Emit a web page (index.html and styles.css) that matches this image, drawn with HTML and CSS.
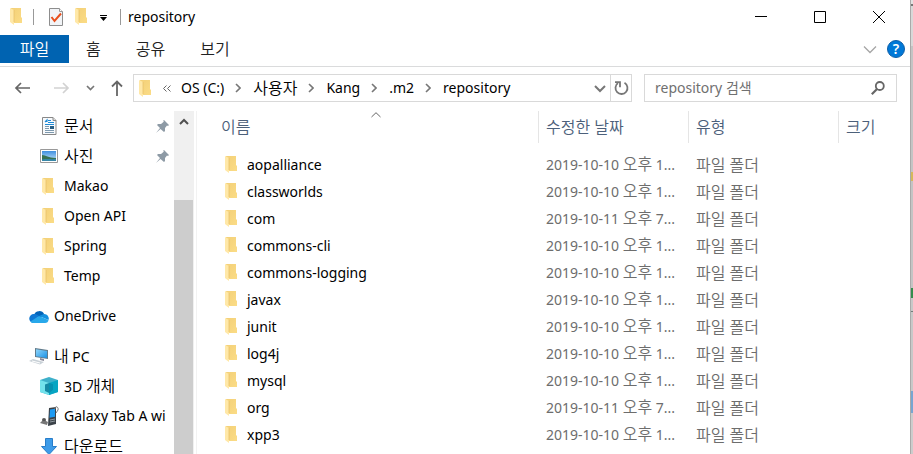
FILE: index.html
```html
<!DOCTYPE html>
<html lang="ko">
<head>
<meta charset="utf-8">
<title>repository</title>
<link rel="stylesheet" href="styles.css">
</head>
<body>
<svg class="sprite" aria-hidden="true">
  <defs>
    <linearGradient id="fold" x1="0" y1="0" x2="1" y2="1"><stop offset="0" stop-color="#f3d078"/><stop offset="1" stop-color="#fbdc86"/></linearGradient>
    <linearGradient id="sky" x1="0" y1="0" x2="0" y2="1"><stop offset="0" stop-color="#3f8fe0"/><stop offset="1" stop-color="#c9e8fa"/></linearGradient>
    <linearGradient id="screen" x1="0" y1="0" x2="1" y2="1"><stop offset="0" stop-color="#8fd6fb"/><stop offset="1" stop-color="#1a90e4"/></linearGradient>
  </defs>
  <symbol id="folder" viewBox="0 0 12 17"><path d="M1 0h10v9l1 1v5H3z" fill="url(#fold)"/><path d="M0 0l4 2v15l-4-3z" fill="#ffe8a8"/><path d="M4 2v12" stroke="#e9c26a" stroke-width=".8"/></symbol>
  <symbol id="chev" viewBox="0 0 6 10"><path d="M1 1l4 4-4 4" fill="none" stroke="#777" stroke-width="1.6"/></symbol>
  <symbol id="pin" viewBox="0 0 13 13"><path d="M8 0l5 5-1 1-1-.5L9 8v3l-1 1-3.500-3L0 13l4-5-3-3 1-1h3l3-2.500L7 1z" fill="#8d9aa5"/></symbol>
</svg>
<div class="desktop">
<main class="window">
  <header class="titlebar">
    <svg class="folder"><use href="#folder"/></svg>
    <span class="rule first"></span>
    <button class="plain props" aria-label="속성"><svg width="14" height="18" viewBox="0 0 14 18"><path d="M.5.5h10l3 3v14H.500z" fill="#f2f4f7" stroke="#8d8d8d"/><path d="M10.500.5v3h3" fill="#fff" stroke="#999"/><path d="M2.500 9l3 4L12 5.500" fill="none" stroke="#e8501e" stroke-width="2"/></svg></button>
    <button class="plain newf" aria-label="새 폴더"><svg class="folder"><use href="#folder"/></svg></button>
    <button class="plain custom" aria-label="빠른 실행 도구 모음 사용자 지정"><svg width="7" height="6" viewBox="0 0 7 6"><path d="M0 0h7v1H0zM0 2h7L3.500 6z"/></svg></button>
    <span class="rule"></span>
    <h1 class="title">repository</h1>
    <div class="controls">
      <button class="plain" aria-label="최소화"><svg width="12" height="12"><path d="M0 5.500h12" stroke="#000"/></svg></button>
      <button class="plain" aria-label="최대화"><svg width="12" height="12"><path d="M.5.5h11v11H.500z" fill="none" stroke="#000"/></svg></button>
      <button class="plain" aria-label="닫기"><svg width="12" height="12"><path d="M0 0l12 12M12 0L0 12" stroke="#000"/></svg></button>
    </div>
  </header>
  <nav class="tabs">
    <button class="plain file">파일</button>
    <button class="plain tab">홈</button>
    <button class="plain tab">공유</button>
    <button class="plain tab">보기</button>
    <div class="tools">
      <button class="plain" aria-label="리본 확장"><svg width="12" height="7"><path d="M0 .5l6 6 6-6" fill="none" stroke="#a5a5a5" stroke-width="1.300"/></svg></button>
      <button class="plain help" aria-label="도움말">?</button>
    </div>
  </nav>
  <div class="navbar">
    <div class="history">
      <button class="plain" aria-label="뒤로"><svg width="16" height="12" viewBox="0 0 16 12"><path d="M15 6H1M6 1L1 6l5 5" fill="none" stroke="#666" stroke-width="1.700"/></svg></button>
      <button class="plain" aria-label="앞으로"><svg width="16" height="12" viewBox="0 0 16 12"><path d="M0 6h14M9 1l5 5-5 5" fill="none" stroke="#d2d2d2" stroke-width="1.700"/></svg></button>
      <button class="plain" aria-label="최근 위치"><svg width="9" height="6"><path d="M1 1l3.500 3.500L8 1" fill="none" stroke="#777" stroke-width="1.700"/></svg></button>
      <button class="plain" aria-label="위로"><svg width="12" height="16" viewBox="0 0 12 16"><path d="M6 16V1M1 6.500l5-5 5 5" fill="none" stroke="#666" stroke-width="1.800"/></svg></button>
    </div>
    <div class="address">
      <svg class="folder"><use href="#folder"/></svg>
      <svg class="more" width="8" height="7"><path d="M3.500.5l-3 3 3 3M7.500.5l-3 3 3 3" fill="none" stroke="#666"/></svg>
      <a href="#">OS (C:)</a><svg class="chev"><use href="#chev"/></svg>
      <a href="#" class="ko">사용자</a><svg class="chev"><use href="#chev"/></svg>
      <a href="#">Kang</a><svg class="chev"><use href="#chev"/></svg>
      <a href="#">.m2</a><svg class="chev"><use href="#chev"/></svg>
      <a href="#">repository</a>
      <button class="plain drop" aria-label="이전 위치"><svg width="12" height="8"><path d="M1 1l5 5 5-5" fill="none" stroke="#777" stroke-width="2"/></svg></button>
      <button class="plain refresh" aria-label="새로 고침"><svg width="15" height="15" viewBox="0 0 15 15"><path d="M10.500 1.800a6 6 0 1 1-6.500.3" fill="none" stroke="#777" stroke-width="1.800"/><path d="M1 1.200h5v5" fill="none" stroke="#777" stroke-width="1.800"/></svg></button>
    </div>
    <label class="search">
      <input type="text" aria-label="repository 검색" placeholder="repository 검색">
      <svg width="14" height="14" viewBox="0 0 14 14"><circle cx="8.800" cy="5" r="4" fill="none" stroke="#666" stroke-width="1.800"/><path d="M6 8L.8 13.200" stroke="#666" stroke-width="2.200"/></svg>
    </label>
  </div>
  <div class="body">
    <aside class="side">
      <ul class="tree">
        <li class="sub"><span class="ico"><svg width="15" height="18" viewBox="0 0 15 18"><path d="M.5.5h10.500l3 3v14H.500z" fill="#f8fafc" stroke="#888"/><path d="M11 .5v3h3" fill="#ddd" stroke="#888"/><path d="M3 5l2-2v2M6 3.500h3M6 5.500h6M3 7.500h9" fill="none" stroke="#1e8ad6" stroke-width="1.200"/><path d="M3 9.500h4M3 11.500h4M3 13.500h9M3 15.500h9" stroke="#7d99ae"/><path d="M8 9h4v3H8z" fill="#265d83"/></svg></span><span class="ko">문서</span><svg class="pin"><use href="#pin"/></svg></li>
        <li class="sub"><span class="ico"><svg width="18" height="14" viewBox="0 0 18 14"><path d="M.5.5h17v13H.500z" fill="#fff" stroke="#999"/><path d="M2 2h14v10H2z" fill="url(#sky)"/><path d="M2 6c4 0 6 3 14 3v3H2z" fill="#387253"/><path d="M2 10.500c5-1 9 0 14-.5v2H2z" fill="#3787a8"/></svg></span><span class="ko">사진</span><svg class="pin"><use href="#pin"/></svg></li>
        <li class="sub"><span class="ico"><svg class="folder"><use href="#folder"/></svg></span>Makao</li>
        <li class="sub"><span class="ico"><svg class="folder"><use href="#folder"/></svg></span>Open API</li>
        <li class="sub"><span class="ico"><svg class="folder"><use href="#folder"/></svg></span>Spring</li>
        <li class="sub"><span class="ico"><svg class="folder"><use href="#folder"/></svg></span>Temp</li>
      </ul>
      <ul class="tree">
        <li><span class="ico"><svg width="20" height="13" viewBox="0 0 20 13"><path d="M5 5a5.500 5.500 0 0 1 10.200-.8L11 8z" fill="#0364b8"/><path d="M4.500 13A4.500 4.500 0 0 1 5 4c2 0 3 .6 5 2L4 12z" fill="#0f78d4"/><path d="M10 6l5-2a4.500 4.500 0 0 1 4.500 6z" fill="#1490df"/><path d="M1.500 11.500L10 6l9.500 4c-.2 2-1.500 3-3.500 3H4.500c-1.300 0-2.300-.5-3-1.500z" fill="#28a8ea"/></svg></span>OneDrive</li>
      </ul>
      <ul class="tree">
        <li><span class="ico"><svg width="20" height="17" viewBox="0 0 20 17"><path d="M6 0l13 2v9l-13-2z" fill="#607a8b"/><path d="M7 1.200l11 1.800v7L7 8.200z" fill="url(#screen)"/><path d="M11 10l4 1v2l-4-1z" fill="#889"/><path d="M0 13l4-2 11 3-4 2.500z" fill="#c9d1d7"/><path d="M3 13l8 2" stroke="#fff"/></svg></span><span><span class="ko">내</span> PC</span></li>
        <li class="sub"><span class="ico"><svg width="18" height="18" viewBox="0 0 18 18"><path d="M9 0l9 3v12l-9 3-9-3V3z" fill="#3eb0ca"/><path d="M0 3l9 3v12l-9-3z" fill="#72e2ec"/><path d="M18 3L9 6v12l9-3z" fill="#06a5c3"/><path d="M5 7.500L9 6l4 1.500v5L9 16l-4-2z" fill="#168aa5"/><path d="M9 6v10l4-3.500v-5z" fill="#0590b0"/></svg></span><span>3D <span class="ko">개체</span></span></li>
        <li class="sub"><span class="ico"><svg width="20" height="20" viewBox="0 0 20 20"><path d="M10 2l7-1v17l-8 2z" fill="#3b4248"/><path d="M11 3.500l5-.7v8l-5.500 1z" fill="#1d9af2"/><path d="M11 14l5-1M11 16l5-1" stroke="#90999f"/><path d="M16 3c0-4 4-2 3 1l-2 3" fill="none" stroke="#777"/><circle cx="5" cy="14" r="2" fill="#555"/><path d="M1 17l2-2h4l2 1-1 3z" fill="#777"/></svg></span>Galaxy Tab A wi</li>
        <li class="sub"><span class="ico"><svg width="16" height="17" viewBox="0 0 16 17"><path d="M4.500.5h7v8h4L8 16.500.500 8.500h4z" fill="#3e9ce9" stroke="#287dc9"/></svg></span><span class="ko">다운로드</span></li>
      </ul>
    </aside>
    <div class="scroll"><svg width="10" height="7"><path d="M1 6l4-4 4 4" fill="none" stroke="#505050" stroke-width="2"/></svg><div class="thumb"></div></div>
    <section class="files">
      <table>
        <colgroup><col><col class="c-date"><col class="c-type"><col class="c-size"></colgroup>
        <thead><tr><th class="name">이름<svg class="sort" width="10" height="6"><path d="M.5 5L5 .7 9.500 5" fill="none" stroke="#666"/></svg></th><th>수정한 날짜</th><th>유형</th><th>크기</th></tr></thead>
        <tbody>
          <tr><td><svg class="folder"><use href="#folder"/></svg>aopalliance</td><td>2019-10-10 <span class="ko">오후</span> 1...</td><td class="ko">파일 폴더</td><td></td></tr>
          <tr><td><svg class="folder"><use href="#folder"/></svg>classworlds</td><td>2019-10-10 <span class="ko">오후</span> 1...</td><td class="ko">파일 폴더</td><td></td></tr>
          <tr><td><svg class="folder"><use href="#folder"/></svg>com</td><td>2019-10-11 <span class="ko">오후</span> 7...</td><td class="ko">파일 폴더</td><td></td></tr>
          <tr><td><svg class="folder"><use href="#folder"/></svg>commons-cli</td><td>2019-10-10 <span class="ko">오후</span> 1...</td><td class="ko">파일 폴더</td><td></td></tr>
          <tr><td><svg class="folder"><use href="#folder"/></svg>commons-logging</td><td>2019-10-10 <span class="ko">오후</span> 1...</td><td class="ko">파일 폴더</td><td></td></tr>
          <tr><td><svg class="folder"><use href="#folder"/></svg>javax</td><td>2019-10-10 <span class="ko">오후</span> 1...</td><td class="ko">파일 폴더</td><td></td></tr>
          <tr><td><svg class="folder"><use href="#folder"/></svg>junit</td><td>2019-10-10 <span class="ko">오후</span> 1...</td><td class="ko">파일 폴더</td><td></td></tr>
          <tr><td><svg class="folder"><use href="#folder"/></svg>log4j</td><td>2019-10-10 <span class="ko">오후</span> 1...</td><td class="ko">파일 폴더</td><td></td></tr>
          <tr><td><svg class="folder"><use href="#folder"/></svg>mysql</td><td>2019-10-10 <span class="ko">오후</span> 1...</td><td class="ko">파일 폴더</td><td></td></tr>
          <tr><td><svg class="folder"><use href="#folder"/></svg>org</td><td>2019-10-11 <span class="ko">오후</span> 7...</td><td class="ko">파일 폴더</td><td></td></tr>
          <tr><td><svg class="folder"><use href="#folder"/></svg>xpp3</td><td>2019-10-10 <span class="ko">오후</span> 1...</td><td class="ko">파일 폴더</td><td></td></tr>
        </tbody>
      </table>
    </section>
  </div>
</main>
<div class="behind"></div>
</div>
</body>
</html>
```
FILE: styles.css
```css
* { box-sizing: border-box; }
body { margin: 0; overflow: hidden; background: #fff; color: #000; font: 14px/20px "Noto Sans", "Noto Sans CJK KR", sans-serif; }
svg { display: block; flex: none; overflow: visible; }
.sprite { position: absolute; width: 0; height: 0; }
.plain { display: flex; align-items: center; justify-content: center; padding: 0; border: 0; background: none; color: inherit; font: inherit; }
.ko { font-size: 16px; font-weight: 350; }
.folder { width: 12px; height: 17px; }

.desktop { display: flex; height: 100vh; }
.window { flex: 1; min-width: 0; display: flex; flex-direction: column; }
.behind { width: 3px; border-left: 1px solid #aaa; background: linear-gradient(#e2e2e2 0 4px, #777 4px 6px, #d8d8d8 6px 46px, #c4c4c4 46px 172px, #d5b85b 172px 181px, #c4c4c4 181px 288px, #348d4d 288px 298px, #c8c8c8 298px 311px, #727d7a 311px 312px, #c8c8c8 312px 391px, #77a5d1 391px 413px, #ccc 413px); }

.titlebar { display: flex; align-items: center; height: 35px; padding: 0 25px 2px 10px; }
.rule { width: 1px; height: 16px; background: #999; }
.rule.first { margin-left: 11px; }
.props { margin-left: 15px; }
.newf { margin-left: 12px; }
.custom { margin: 3px 13px 0 13px; }
.title { margin: 0 0 0 7px; font-size: 14px; font-weight: 400; }
.controls { display: flex; gap: 47px; margin-left: auto; }

.tabs { display: flex; height: 32px; padding-bottom: 3px; border-bottom: 1px solid #dadbdc; font-size: 16px; font-weight: 350; color: #222; }
.file { width: 69px; background: #0063b1; color: #fff; }
.tab { padding-left: 17px; margin-right: 18px; }
.tools { display: flex; align-items: center; gap: 11px; margin-left: auto; padding-right: 5px; }
.tools .help { width: 18px; height: 18px; border: 1px solid #0f5fa8; border-radius: 50%; background: #0078d7; color: #fff; font-size: 14px; font-weight: 600; }

.navbar { display: flex; align-items: center; height: 44px; padding: 0 13px 2px 15px; }
.history { display: flex; align-items: center; gap: 16px; width: 118px; }
.history button:first-child { margin-right: 7px; }
.address { flex: 1; min-width: 0; display: flex; align-items: center; height: 28px; padding-left: 5px; border: 1px solid #d9d9d9; white-space: nowrap; }
.address a { color: #000; text-decoration: none; }
.more { margin: 0 10px 0 12px; }
.chev { width: 6px; height: 10px; margin: 0 12px 0 11px; }
.drop { margin-left: auto; padding: 2px 4px 0; }
.refresh { width: 21px; height: 26px; border-left: 1px solid #d9d9d9; }
.search { display: flex; align-items: center; width: 253px; height: 28px; margin-left: 12px; padding: 0 11px 0 10px; border: 1px solid #d9d9d9; }
.search input { flex: 1; min-width: 0; padding: 0; border: 0; outline: 0; background: none; font: inherit; }
.search input::placeholder { color: #707070; opacity: 1; }

.body { flex: 1; min-height: 0; display: flex; }
.side { width: 174px; overflow: hidden; }
.tree { margin: 0 0 10px; padding: 0; list-style: none; }
.tree li { display: flex; align-items: center; height: 30px; padding-left: 29px; white-space: nowrap; }
.tree .ico { display: flex; justify-content: center; width: 20px; margin-right: 5px; }
.tree .sub { padding-left: 39px; }
.sub .folder { margin-right: 2px; }
.pin { width: 13px; height: 13px; margin: 0 5px 0 auto; }
.scroll { display: flex; flex-direction: column; align-items: center; width: 20px; padding-top: 7px; background: #f0f0f0; }
.thumb { flex: 1; width: 100%; margin-top: 75px; border-right: 1px solid #f0f0f0; background: #cdcdcd; }
.files { flex: 1; min-width: 0; overflow: hidden; margin-left: 2px; padding-left: 16px; border-left: 1px solid #f2f2f2; }

table { width: 100%; table-layout: fixed; border-collapse: separate; border-spacing: 0; }
.c-date, .c-type { width: 150px; }
.c-size { width: 72px; }
th { height: 32px; padding: 0 7px; border-left: 1px solid #e5e5e5; color: #4c607a; font-size: 16px; font-weight: 350; text-align: left; }
th.name { position: relative; border: 0; padding-left: 8px; }
.sort { position: absolute; top: 1px; left: 50%; margin-left: -5px; }
tbody::before { content: ""; display: block; height: 8px; }
td { height: 27px; padding: 0 8px; color: #6d6d6d; white-space: nowrap; overflow: hidden; }
td:first-child { display: flex; align-items: center; gap: 10px; padding-left: 12px; color: #000; }
```
